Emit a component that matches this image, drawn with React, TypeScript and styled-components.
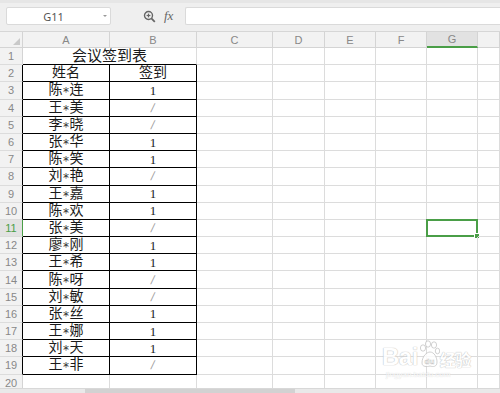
import React from "react";
import styled, { createGlobalStyle } from "styled-components";

const GlobalStyle = createGlobalStyle`
  html, body {
    margin: 0;
    padding: 0;
    background: #ffffff;
  }
  body {
    font-family: "Noto Sans", "Noto Sans CJK SC", sans-serif;
  }
`;

const GREEN = "#4a9e47";
const GRID = "#dcdcdc";
const ROW_H = 17.2;

const COLS = ["A", "B", "C", "D", "E", "F", "G", ""];
const COL_WIDTHS = "23px 87px 87px 76px 52px 51px 51px 51px 1fr";

const rows: { name: string; sign: string }[] = [
  { name: "陈*连", sign: "1" },
  { name: "王*美", sign: "/" },
  { name: "李*晓", sign: "/" },
  { name: "张*华", sign: "1" },
  { name: "陈*笑", sign: "1" },
  { name: "刘*艳", sign: "/" },
  { name: "王*嘉", sign: "1" },
  { name: "陈*欢", sign: "1" },
  { name: "张*美", sign: "/" },
  { name: "廖*刚", sign: "1" },
  { name: "王*希", sign: "1" },
  { name: "陈*呀", sign: "/" },
  { name: "刘*敏", sign: "/" },
  { name: "张*丝", sign: "1" },
  { name: "王*娜", sign: "1" },
  { name: "刘*天", sign: "1" },
  { name: "王*非", sign: "/" },
];

const Page = styled.div`
  width: 500px;
  height: 393px;
  display: flex;
  flex-direction: column;
  overflow: hidden;
  background: #fff;
`;

const Toolbar = styled.div`
  height: 32px;
  flex: 0 0 32px;
  box-sizing: border-box;
  background: #efefef;
  border-top: 3px solid #e6e6e6;
  border-bottom: 1px solid #d6d6d6;
  display: flex;
  align-items: center;
  padding: 0 0 2px 6px;
`;

const NameBox = styled.div`
  width: 105px;
  height: 18px;
  box-sizing: border-box;
  background: #fff;
  border: 1px solid #dadada;
  border-radius: 2px;
  display: flex;
  align-items: center;
  justify-content: center;
  position: relative;
  font-size: 11px;
  color: #555;
  padding-right: 10px;
`;

const Caret = styled.span`
  position: absolute;
  right: 3px;
  top: 7px;
  width: 0;
  height: 0;
  border-left: 2px solid transparent;
  border-right: 2px solid transparent;
  border-top: 2px solid #999;
`;

const ToolIcons = styled.div`
  display: flex;
  align-items: center;
  gap: 8px;
  margin-left: 32px;
  width: 38px;
`;

const Fx = styled.span`
  font-family: "Liberation Serif", serif;
  font-style: italic;
  font-size: 13px;
  color: #666;
`;

const FormulaInput = styled.div`
  flex: 1;
  height: 18px;
  margin-left: 4px;
  box-sizing: border-box;
  background: #fff;
  border: 1px solid #dadada;
  border-right: none;
  border-radius: 2px 0 0 2px;
`;

const Sheet = styled.div`
  flex: 1;
  position: relative;
  overflow: hidden;
  display: grid;
  grid-template-columns: ${COL_WIDTHS};
  grid-template-rows: 16px repeat(21, ${ROW_H}px);
  align-content: start;
`;

const Corner = styled.div`
  background: #f2f2f2;
  border-right: 1px solid #d4d4d4;
  border-bottom: 1px solid #d4d4d4;
  box-sizing: border-box;
  position: relative;
  &::after {
    content: "";
    position: absolute;
    right: 2px;
    bottom: 2px;
    width: 0;
    height: 0;
    border-left: 7px solid transparent;
    border-bottom: 7px solid #c9c9c9;
  }
`;

const ColHead = styled.div<{ $active?: boolean }>`
  box-sizing: border-box;
  background: ${({ $active }) => ($active ? "#e2e2e2" : "#f2f2f2")};
  border-right: 1px solid #d4d4d4;
  border-bottom: ${({ $active }) =>
    $active ? `2px solid ${GREEN}` : "1px solid #d4d4d4"};
  display: flex;
  align-items: center;
  justify-content: center;
  font-size: 11px;
  color: #888;
  font-family: "Liberation Sans", "Noto Sans", sans-serif;
`;

const RowHead = styled.div<{ $active?: boolean; $edge?: string }>`
  box-sizing: border-box;
  background: ${({ $active }) => ($active ? "#e2e2e2" : "#f2f2f2")};
  border-right: 1px solid ${({ $edge }) => $edge || "#d4d4d4"};
  border-bottom: 1px solid #dcdcdc;
  display: flex;
  align-items: center;
  justify-content: center;
  font-size: 11px;
  color: ${({ $active }) => ($active ? GREEN : "#888")};
  font-family: "Liberation Sans", "Noto Sans", sans-serif;
`;

const Cell = styled.div<{
  $span?: number;
  $right?: string;
  $bottom?: string;
  $size?: number;
}>`
  box-sizing: border-box;
  position: relative;
  grid-column: span ${({ $span }) => $span || 1};
  border-right: 1px solid ${({ $right }) => $right || GRID};
  border-bottom: 1px solid ${({ $bottom }) => $bottom || GRID};
  display: flex;
  align-items: center;
  justify-content: center;
  font-family: "Liberation Serif", "Noto Sans CJK SC", serif;
  font-size: ${({ $size }) => $size || 14}px;
  color: #1a1a1a;
  line-height: 1;
  white-space: nowrap;
`;

const Star = styled.span`
  font-family: "DejaVu Sans", sans-serif;
  font-size: 12px;
  color: #333;
  margin: 0 0.5px;
  transform: translateY(2px);
  display: inline-block;
`;

const Slash = styled.span`
  font-family: "Liberation Sans", sans-serif;
  font-size: 12px;
  color: #a0a0a0;
  transform: skewX(-12deg);
`;

const Selection = styled.div`
  position: absolute;
  left: -1px;
  top: -1px;
  right: -1px;
  bottom: -1px;
  border: 2px solid ${GREEN};
  pointer-events: none;
  &::after {
    content: "";
    position: absolute;
    right: -4px;
    bottom: -4px;
    width: 4px;
    height: 4px;
    background: ${GREEN};
    border: 1px solid #fff;
  }
`;

const Watermark = styled.div`
  position: absolute;
  left: 382px;
  top: 307px;
  display: flex;
  flex-direction: column;
  align-items: flex-start;
  opacity: 0.85;
  pointer-events: none;
`;

const MarkRow = styled.div`
  display: flex;
  align-items: flex-end;
`;

const MarkText = styled.span<{ $size: number }>`
  font-family: "Liberation Sans", "Noto Sans CJK SC", sans-serif;
  font-size: ${({ $size }) => $size}px;
  font-weight: bold;
  color: #fff;
  line-height: 1;
  text-shadow: 0 0 1px #b8b8b8, 0 0 1px #b8b8b8;
  letter-spacing: -0.5px;
`;

const MarkUrl = styled.span`
  font-family: "Liberation Sans", sans-serif;
  font-size: 8px;
  color: #fff;
  text-shadow: 0 0 1px #c4c4c4;
  margin-left: 4px;
  margin-top: 1px;
`;

const ScrollStrip = styled.div`
  flex: 0 0 4px;
  height: 4px;
  background: #e9e9e9;
  border-top: 1px solid #d8d8d8;
  display: flex;
`;

const Thumb = styled.div`
  margin-left: 85px;
  width: 210px;
  background: #d2d2d2;
`;

const Magnifier = () => (
  <svg width="13" height="13" viewBox="0 0 13 13">
    <circle cx="5.5" cy="5.5" r="4" fill="none" stroke="#666" strokeWidth="1.4" />
    <line x1="3.6" y1="5.5" x2="7.4" y2="5.5" stroke="#666" strokeWidth="1.2" />
    <line x1="5.5" y1="3.6" x2="5.5" y2="7.4" stroke="#666" strokeWidth="1.2" />
    <line x1="8.4" y1="8.4" x2="11.8" y2="11.8" stroke="#666" strokeWidth="1.8" />
  </svg>
);

const Paw = () => (
  <svg width="22" height="30" viewBox="0 0 22 30">
    <g fill="#fff" stroke="#bdbdbd" strokeWidth="0.8">
      <ellipse cx="5" cy="9" rx="2.6" ry="3.2" />
      <ellipse cx="10" cy="5" rx="2.6" ry="3.2" />
      <ellipse cx="16" cy="6" rx="2.6" ry="3.2" />
      <ellipse cx="19.5" cy="12" rx="2.2" ry="2.8" />
      <path d="M4 24 C4 17 9 13 12 13 C16 13 19 18 19 23 C19 28 15 28 12 27 C9 28 4 28 4 24 Z" />
      <text x="11.5" y="25" fontSize="8" fontFamily="Liberation Sans" fontWeight="bold" fill="#fff" stroke="#bdbdbd" strokeWidth="0.5" textAnchor="middle">du</text>
    </g>
  </svg>
);

const SEL_ROW = 11;
const SEL_COL = 6;

const Name: React.FC<{ value: string }> = ({ value }) => {
  const [first, last] = value.split("*");
  return (
    <>
      {first}
      <Star>*</Star>
      {last}
    </>
  );
};

const renderBlankCells = (rowNo: number, from: number) =>
  COLS.slice(from).map((c, i) => {
    const colIdx = from + i;
    const selected = rowNo === SEL_ROW && colIdx === SEL_COL;
    return (
      <Cell key={`${colIdx}-${rowNo}`}>{selected && <Selection />}</Cell>
    );
  });

export default function App() {
  const dataRows = rows.map((r, i) => ({ ...r, rowNo: i + 3 }));

  return (
    <Page>
      <GlobalStyle />
      <Toolbar>
        <NameBox>
          G11
          <Caret />
        </NameBox>
        <ToolIcons>
          <Magnifier />
          <Fx>fx</Fx>
        </ToolIcons>
        <FormulaInput />
      </Toolbar>

      <Sheet>
        <Corner />
        {COLS.map((c, i) => (
          <ColHead key={i} $active={i === SEL_COL}>
            {c}
          </ColHead>
        ))}

        <RowHead>1</RowHead>
        <Cell $span={2} $bottom="#000" $right={GRID} $size={15}>
          会议签到表
        </Cell>
        {renderBlankCells(1, 2)}

        <RowHead $edge="#000">2</RowHead>
        <Cell $right="#000" $bottom="#000">
          姓名
        </Cell>
        <Cell $right="#000" $bottom="#000">
          签到
        </Cell>
        {renderBlankCells(2, 2)}

        {dataRows.map((r) => (
          <React.Fragment key={r.rowNo}>
            <RowHead
              $active={r.rowNo === SEL_ROW}
              $edge={r.rowNo === SEL_ROW ? GREEN : "#000"}
            >
              {r.rowNo}
            </RowHead>
            <Cell $right="#000" $bottom="#000">
              <Name value={r.name} />
            </Cell>
            <Cell $right="#000" $bottom="#000" $size={13}>
              {r.sign === "/" ? <Slash>/</Slash> : r.sign}
            </Cell>
            {renderBlankCells(r.rowNo, 2)}
          </React.Fragment>
        ))}

        {[20, 21].map((n) => (
          <React.Fragment key={n}>
            <RowHead>{n}</RowHead>
            {renderBlankCells(n, 0)}
          </React.Fragment>
        ))}

        <Watermark>
          <MarkRow>
            <MarkText $size={24}>Bai</MarkText>
            <Paw />
            <MarkText $size={16}>经验</MarkText>
          </MarkRow>
          <MarkUrl>jingyan.baidu.com</MarkUrl>
        </Watermark>
      </Sheet>
      <ScrollStrip>
        <Thumb />
      </ScrollStrip>
    </Page>
  );
}
